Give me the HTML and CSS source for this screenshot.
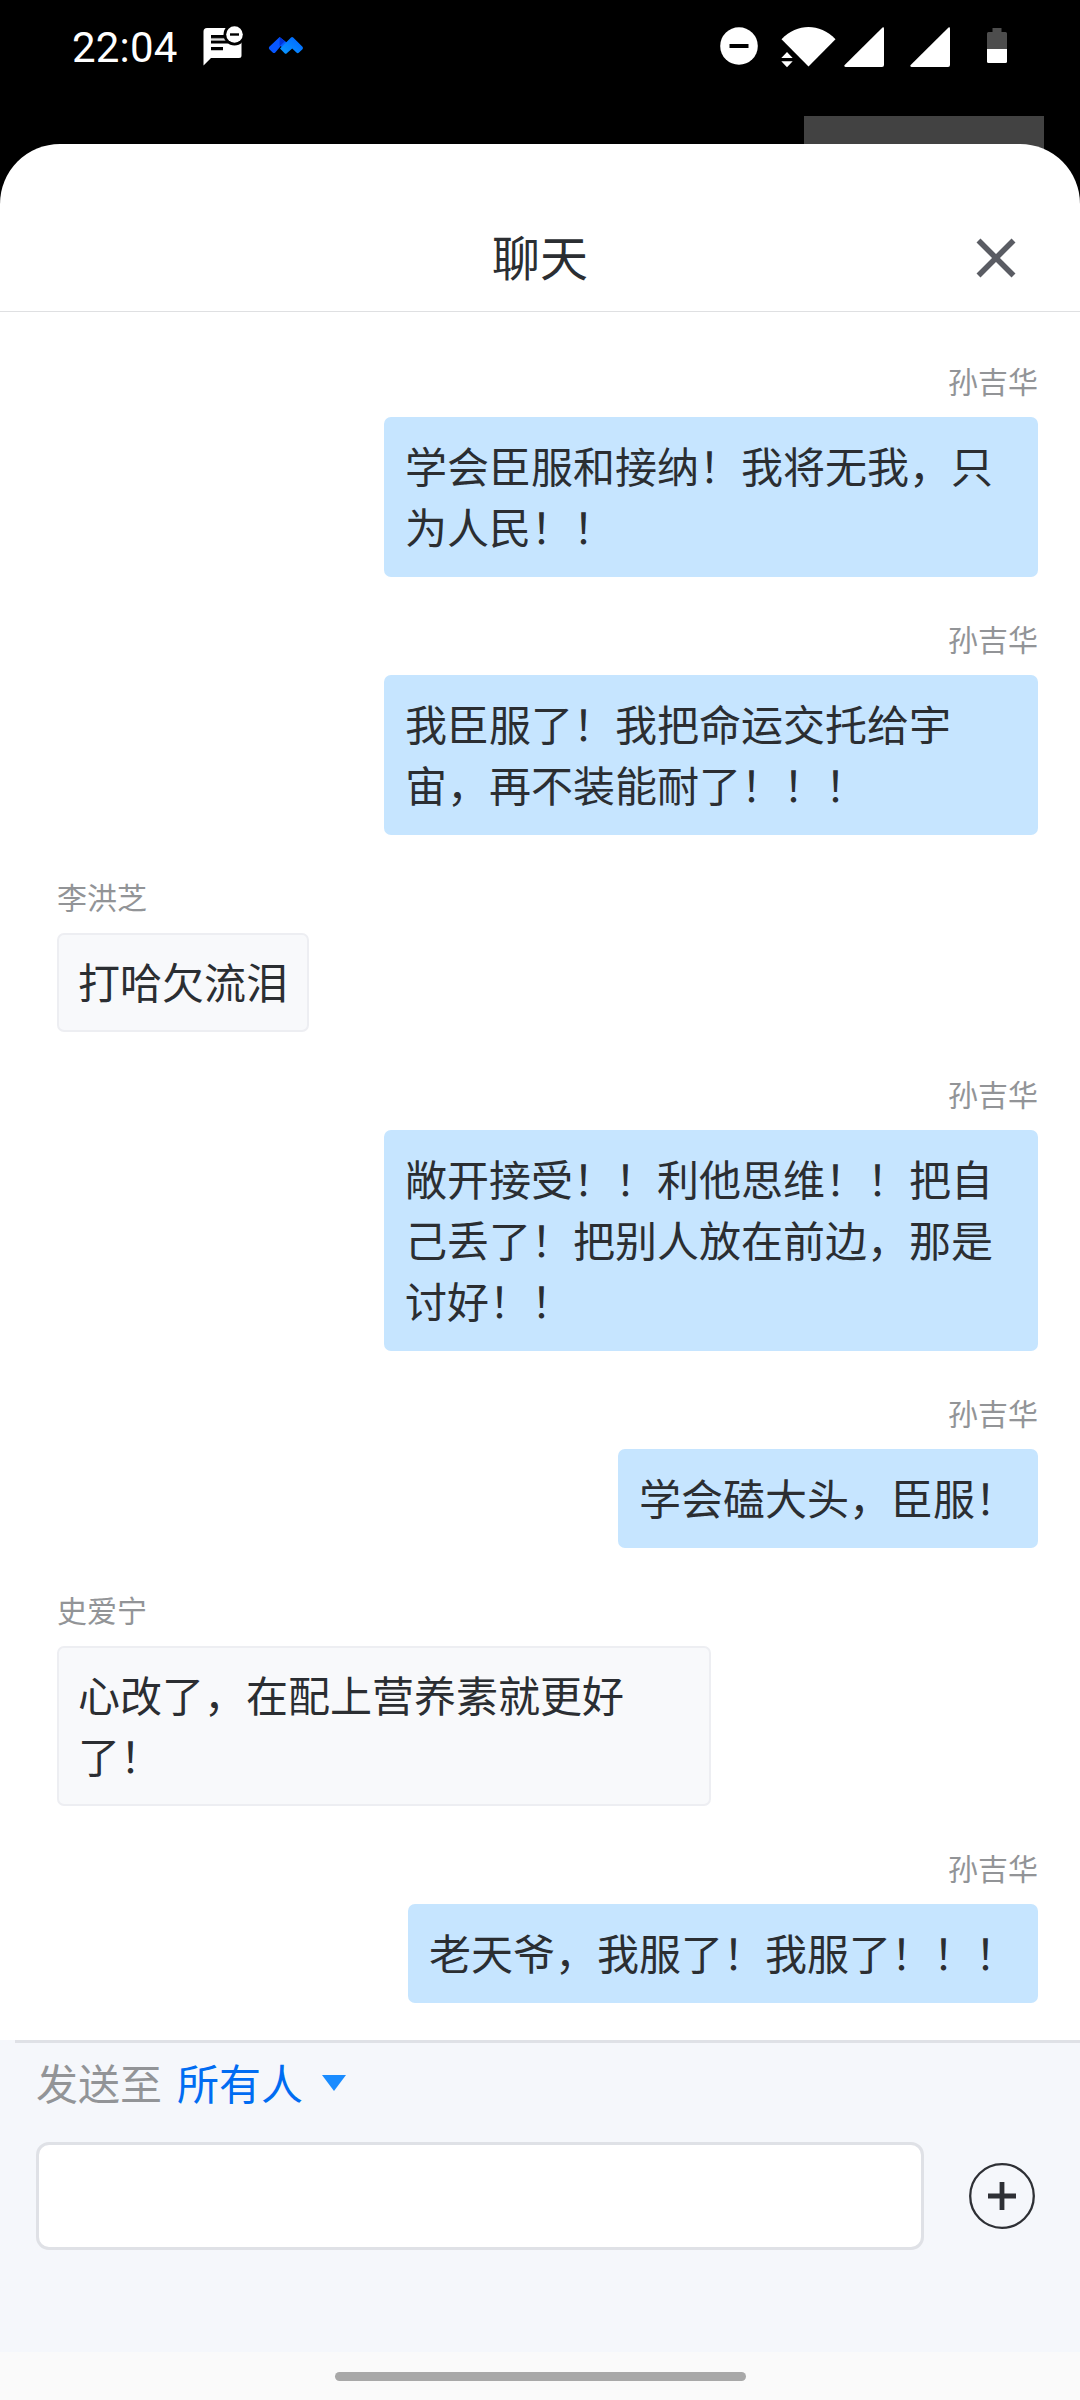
FILE: index.html
```html
<!DOCTYPE html>
<html lang="zh-CN">
<head>
<meta charset="utf-8">
<title>聊天</title>
<link rel="stylesheet" href="styles.css">
</head>
<body>
<div class="screen">
  <div class="statusbar">
    <span class="time">22:04</span>
    <svg class="ic-message" width="40" height="40" viewBox="0 0 40 40">
      <path d="M4 2h32a2.500 2.500 0 0 1 2.500 2.500v25a2.500 2.500 0 0 1-2.500 2.500H8l-7.500 7.500V5.500A3.500 3.500 0 0 1 4 2z" fill="#fff"/>
      <path d="M8 10.600h14M8 16h17M8 22.600h12" stroke="#000" stroke-width="3.200"/>
      <path d="M8 12.400h14M8 14.200h15" stroke="#999" stroke-width="1"/>
      <circle cx="31.500" cy="8.500" r="11" fill="#000"/>
      <circle cx="31.500" cy="8.500" r="8.300" fill="#fff"/>
      <path d="M27 8.500h9" stroke="#000" stroke-width="2.400"/>
    </svg>
    <svg class="ic-meeting" width="36" height="20" viewBox="0 0 36 20">
      <defs><linearGradient id="peak" x1="0" y1="1" x2="1" y2="0"><stop offset="0" stop-color="#0a9bff"/><stop offset="1" stop-color="#0062ff"/></linearGradient></defs>
      <path d="M11.600 1 22 9l-6 5-3.200-4-5.500 6.500q-1.300 1.200-2.600 0L1.300 13.200q-1-1.200 0-2.400z" fill="#0757ff"/>
      <path d="M11.600 1v9.200l5.200-5z" fill="#0034d8"/>
      <path d="M23 1.600q1.100-1 2.200 0l9.300 9.200q1 1.200 0 2.400l-3.500 3.400q-1.300 1.200-2.600 0L24.200 12.500 18.800 17.300q-1.100 1-2.200 0L12 12.600z" fill="url(#peak)"/>
    </svg>
    <svg class="ic-dnd" width="38" height="38" viewBox="0 0 38 38">
      <circle cx="19" cy="19" r="18.800" fill="#fff"/>
      <path d="M9.500 19h19" stroke="#000" stroke-width="4"/>
    </svg>
    <svg class="ic-wifi" width="55" height="41" viewBox="0 0 55 41">
      <path d="M.5 12.200C16.500-4 38.500-4 54.500 12.200L27.500 39.500z" fill="#fff"/>
      <path d="M.3 31 6 25l5.700 6zM.3 34.300h11.400L6 40.200z" fill="#fff"/>
    </svg>
    <svg class="ic-signal" width="40" height="40" viewBox="0 0 40 40"><path d="M38.500.4q1.500-.6 1.500 1V38q0 2-2 2H1.500q-2-.3-.8-2z" fill="#fff"/></svg>
    <svg class="ic-signal-2" width="40" height="40" viewBox="0 0 40 40"><path d="M38.500.4q1.500-.6 1.500 1V38q0 2-2 2H1.500q-2-.3-.8-2z" fill="#fff"/></svg>
    <svg class="ic-battery" width="20" height="35" viewBox="0 0 20 35">
      <path d="M5.500 0h9v4H18.500q1.500 0 1.500 1.500V21H0V5.500q0-1.500 1.500-1.500h4z" fill="#4d4d4d"/>
      <path d="M0 21h20v12.500q0 1.500-1.500 1.500h-17q-1.500 0-1.500-1.500z" fill="#fff"/>
    </svg>
  </div>
  <div class="backdrop"></div>
  <main class="sheet">
    <header class="header">
      <h1 class="title">聊天</h1>
      <svg class="close" width="40" height="40" viewBox="0 0 40 40"><path d="M2.500 2.500l35 35M37.500 2.500l-35 35" stroke="#5a5c63" stroke-width="5.600"/></svg>
    </header>
    <section class="messages">
      <article class="message mine"><span class="name">孙吉华</span><p class="bubble">学会臣服和接纳！我将无我，只为人民！！</p></article>
      <article class="message mine"><span class="name">孙吉华</span><p class="bubble">我臣服了！我把命运交托给宇宙，再不装能耐了！！！</p></article>
      <article class="message"><span class="name">李洪芝</span><p class="bubble">打哈欠流泪</p></article>
      <article class="message mine"><span class="name">孙吉华</span><p class="bubble">敞开接受！！利他思维！！把自己丢了！把别人放在前边，那是讨好！！</p></article>
      <article class="message mine"><span class="name">孙吉华</span><p class="bubble">学会磕大头，臣服！</p></article>
      <article class="message"><span class="name">史爱宁</span><p class="bubble">心改了，在配上营养素就更好了！</p></article>
      <article class="message mine"><span class="name">孙吉华</span><p class="bubble">老天爷，我服了！我服了！！！</p></article>
    </section>
    <footer class="composer">
      <div class="rule"></div>
      <div class="recipient">
        <span class="label">发送至</span>
        <span class="target">所有人</span>
        <svg class="caret" width="24" height="16" viewBox="0 0 24 16"><path d="M0 0h24L12 16z" fill="#1a8cff"/></svg>
      </div>
      <div class="entry">
        <div class="field"></div>
        <svg class="add" width="66" height="66" viewBox="0 0 66 66">
          <circle cx="33" cy="33" r="31.800" fill="none" stroke="#2e3035" stroke-width="2.300"/>
          <path d="M19 33h28M33 19v28" stroke="#2e3035" stroke-width="4.800"/>
        </svg>
      </div>
    </footer>
  </main>
  <nav class="navbar"><div class="handle"></div></nav>
</div>
</body>
</html>
```
FILE: styles.css
```css
* { box-sizing: border-box; }
body {
  margin: 0;
  font-family: "Noto Sans CJK SC", sans-serif;
  color: #2b2e32;
  background: #000;
}
.screen {
  width: 1080px;
  height: 2400px;
  display: flex;
  flex-direction: column;
  background: #000;
  overflow: hidden;
}
.statusbar {
  height: 116px;
  display: flex;
  align-items: flex-start;
  padding-left: 72px;
}
.statusbar svg { flex: none; display: block; }
.time {
  width: 131px;
  margin-top: 23px;
  font: 42px/49px Roboto, sans-serif;
  letter-spacing: 0.2px;
  color: #fff;
}
.ic-message { margin-top: 26px; }
.ic-meeting { margin: 36px 0 0 25px; }
.ic-dnd { margin: 27px 0 0 416px; }
.ic-wifi { margin: 27px 0 0 23px; }
.ic-signal { margin: 27px 0 0 8px; }
.ic-signal-2 { margin: 27px 0 0 26px; }
.ic-battery { margin: 28px 0 0 37px; }

.backdrop {
  width: 240px;
  height: 48px;
  margin: 0 36px -20px auto;
  background: #424242;
  flex: none;
}
.sheet {
  height: 2208px;
  flex: none;
  display: flex;
  flex-direction: column;
  background: #fff;
  border-radius: 60px 60px 0 0;
  overflow: hidden;
  position: relative;
}
.header {
  height: 168px;
  flex: none;
  display: grid;
  grid-template-columns: 1fr auto 1fr;
  align-items: center;
  padding-top: 60px;
  border-bottom: 1px solid #dfe0e2;
}
.title {
  grid-column: 2;
  margin: 0;
  padding-bottom: 5px;
  font-size: 48px;
  font-weight: 400;
  line-height: 70px;
}
.close {
  justify-self: end;
  margin-right: 64px;
}
.messages {
  flex: 1;
  display: flex;
  flex-direction: column;
  gap: 39px;
  padding: 46px 42px 0 57px;
}
.message {
  display: flex;
  flex-direction: column;
  align-items: flex-start;
  gap: 15px;
}
.name {
  font-size: 30px;
  line-height: 44px;
  color: #929497;
}
.bubble {
  margin: 0;
  max-width: 654px;
  padding: 15px 19px 19px;
  border: 2px solid #edeef2;
  border-radius: 7px;
  font-size: 42px;
  line-height: 61px;
  background: #f8f9fb;
}
.mine { align-items: flex-end; }
.mine .bubble {
  background: #c6e5ff;
  border-color: #c6e5ff;
}
.composer {
  height: 312px;
  flex: none;
  background: #f5f7fb;
}
.rule {
  height: 3px;
  margin-left: 15px;
  background: #dfe1e6;
}
.recipient {
  display: flex;
  align-items: center;
  height: 99px;
  padding: 0 36px 22px;
  font-size: 42px;
  line-height: 61px;
}
.label { color: #929497; }
.target {
  margin-left: 15px;
  color: #006cf2;
}
.caret {
  margin-left: 19px;
  margin-top: 2px;
}
.entry {
  display: flex;
  align-items: center;
  justify-content: space-between;
  padding: 0 45px 0 36px;
}
.field {
  width: 888px;
  height: 108px;
  background: #fff;
  border: 3px solid #dfe1e6;
  border-radius: 13px;
}
.navbar {
  flex: 1;
  display: flex;
  justify-content: center;
  padding-top: 20px;
  background: #fafafa;
}
.handle {
  width: 411px;
  height: 9px;
  border-radius: 5px;
  background: #a8a8a8;
}
```
